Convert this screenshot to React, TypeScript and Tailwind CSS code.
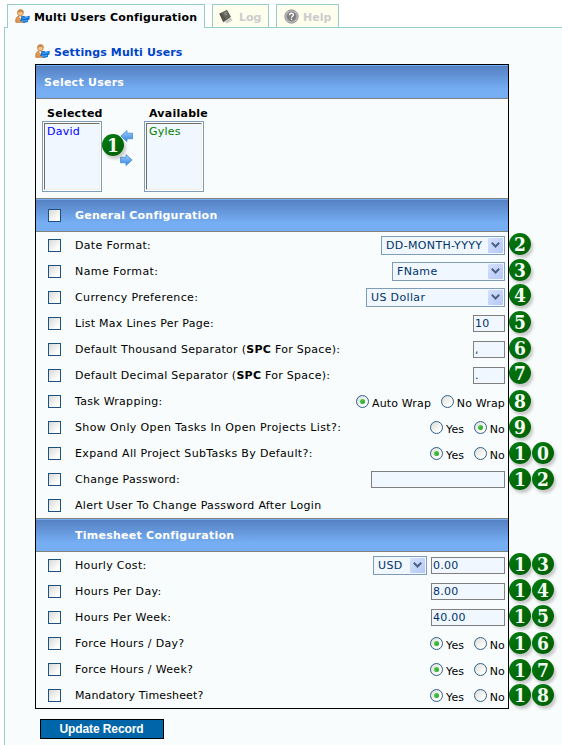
import type { ReactNode } from "react";

function UserIcon() {
  return (
    <svg width="15" height="15" viewBox="0 0 15 15" className="shrink-0">
      <path d="M.8 13.300C.4 9.500 1.500 7.600 4 7l3 .2c2 .8 3 3 3 6.100z" fill="#e09a55" stroke="#b5651d" strokeWidth=".7" />
      <path d="M4 7.300l1.300 2.500L7 7.300z" fill="#fff" />
      <circle cx="5.400" cy="4" r="2.900" fill="#f6c48c" stroke="#b5651d" strokeWidth=".6" />
      <path d="M2.400 4.200C2 1.500 3.800.2 5.500.3c2.300 0 3.600 1.500 3 3.800C7.500 2.800 4.500 2.300 2.400 4.200z" fill="#c98a48" />
      <path d="M6 7.600l3.200-.8 1 1 4.600-1-.4 3.700-1.500.8v1.800l-4.600.9-.8-1.600-2.800-.9 1.600-1.400z" fill="#0f6fd6" />
      <path d="M7 8.600l2 .8 4.500-1.400M7 11.600l2 .6 3-.8" stroke="#4fb4f5" strokeWidth="1" fill="none" />
    </svg>
  );
}

function BookIcon() {
  return (
    <svg width="14" height="15" viewBox="0 0 14 15" className="shrink-0">
      <path d="M5.500 11.500l5.500-3.500 2.500 3.500-6 3z" fill="#b9b9b4" />
      <path d="M6 12.500l5.500-2.800M7 13.500l6-2.500" stroke="#eee" strokeWidth=".6" />
      <path d="M.5 4.500L8 .8l4 7-6.200 4.500-1 1.200L3.500 12z" fill="#66665f" />
      <path d="M.7 4.700l4 7.500M1.500 4l5 7" stroke="#44443e" strokeWidth=".9" />
      <path d="M5 4.500l3-1.500M6 6l2-1" stroke="#a9a9a2" strokeWidth=".9" />
    </svg>
  );
}

function HelpIcon() {
  return (
    <svg width="15" height="15" viewBox="0 0 15 15" className="shrink-0">
      <circle cx="7.500" cy="7.500" r="6.700" fill="#c4c4c4" stroke="#8c8c8c" strokeWidth=".9" />
      <circle cx="7.500" cy="7.500" r="4.900" fill="#7d7d7d" stroke="#9c9c9c" strokeWidth=".8" />
      <path d="M5.500 6.200c.1-2.700 4.100-2.400 3.900-.2-.1 1.300-1.900 1.300-1.900 2.700" fill="none" stroke="#fff" strokeWidth="1.300" />
      <rect x="6.800" y="9.600" width="1.400" height="1.400" fill="#fff" />
    </svg>
  );
}

function MoveArrow({ left = false }: { left?: boolean }) {
  return (
    <svg width="13" height="12" viewBox="0 0 14 13" preserveAspectRatio="none" className={left ? "-scale-x-100" : ""}>
      <defs>
        <linearGradient id="arrowFill" x1="0" y1="0" x2="0" y2="1">
          <stop offset="0" stopColor="#a5d2fa" />
          <stop offset="1" stopColor="#2d83df" />
        </linearGradient>
      </defs>
      <path d="M.5 3.500h6v-3l6.500 6-6.500 6v-3h-6z" fill="url(#arrowFill)" stroke="#3f85d2" strokeWidth=".8" />
    </svg>
  );
}

function Badge({ n, className }: { n: string; className: string }) {
  return (
    <div className={`absolute z-10 flex gap-px ${className}`}>
      {n.split("").map((d, i) => (
        <span
          key={i}
          className="flex h-[22px] w-[22px] items-center justify-center rounded-full bg-linear-135 from-[#087f12] via-[#006b08] to-[#005c0a] font-['DejaVu_Serif_Condensed','DejaVu_Serif',serif] text-[19px] leading-[22px] font-bold tracking-normal font-stretch-condensed text-[#f4fbf0] shadow-[2px_3px_3px_rgba(90,80,80,0.3)]"
        >
          {d}
        </span>
      ))}
    </div>
  );
}

function Check() {
  return <span className="h-[13px] w-[13px] shrink-0 border border-[#1c5180] bg-linear-135 from-[#d9d9d4] to-white to-80%" />;
}

function Select({ value, className }: { value: string; className: string }) {
  return (
    <div className={`flex h-[19px] items-center border border-[#7f9db9] bg-[#f0f7ff] pl-1 text-[#003366] ${className}`}>
      <span className="grow pt-px tracking-[0.35px] whitespace-nowrap">{value}</span>
      <span className="mr-px flex h-[15px] w-[15px] shrink-0 items-center justify-center rounded-[1px] bg-linear-135 from-[#d5e0fd] to-[#b4c8f6]">
        <svg width="9" height="6" viewBox="0 0 9 6">
          <path d="M.8.8l3.700 3.700L8.200.8" fill="none" stroke="#4d6185" strokeWidth="2" />
        </svg>
      </span>
    </div>
  );
}

function Field({ value = "", className }: { value?: string; className: string }) {
  return (
    <div className={`flex h-[17px] items-center border border-[#7f7f7f] bg-[#f0f7ff] pt-px pl-px text-[#003366] ${className}`}>
      {value}
    </div>
  );
}

function Radio({ on = false }: { on?: boolean }) {
  return (
    <span className="flex h-[13px] w-[13px] shrink-0 items-center justify-center rounded-full border border-[#2f5f8f] bg-linear-135 from-[#dcdcd7] to-white to-80%">
      {on && <span className="h-[5px] w-[5px] rounded-full bg-linear-135 from-[#55d551] to-[#1ba01b]" />}
    </span>
  );
}

function Choice({ labels, picked, className }: { labels: [string, string]; picked: 0 | 1; className: string }) {
  return (
    <div className={`flex shrink-0 tracking-[0.15px] ${className}`}>
      {labels.map((label, i) => (
        <div key={label} className={`flex whitespace-nowrap ${i === 0 ? "grow" : ""}`}>
          <Radio on={picked === i} />
          <span className="ml-[3px] h-[13px] leading-[17px]">{label}</span>
        </div>
      ))}
    </div>
  );
}

type RowProps = { label: ReactNode; badge?: string; badgeTop?: string; tracking?: string; children?: ReactNode };

function Row({ label, badge, badgeTop = "top-px", tracking = "tracking-[0.32px]", children }: RowProps) {
  return (
    <div className="relative flex h-[26px] items-center pr-[3px] pl-3">
      <Check />
      <span className={`ml-3.5 grow pt-px whitespace-nowrap ${tracking}`}>{label}</span>
      {children}
      {badge && <Badge n={badge} className={`left-[473px] ${badgeTop}`} />}
    </div>
  );
}

function Header({ title, check = false }: { title: string; check?: boolean }) {
  return (
    <div className="flex h-[34px] items-center border-y border-[#808080] bg-linear-to-b from-[#547fc0] to-[#76aef4] to-75% pl-3 font-bold text-white shadow-[inset_0_1px_0_#76aef4]">
      {check ? <Check /> : <span className="w-[13px]" />}
      <span className="ml-3.5 pt-0.5 tracking-[0.25px]">{title}</span>
    </div>
  );
}

function UserList({ title, name, color }: { title: string; name: string; color: string }) {
  return (
    <div className="w-[60px]">
      <div className="ml-[5px] h-[15px] leading-[16px] font-bold whitespace-nowrap">{title}</div>
      <div className="h-[71px] border border-[#7f9db9] bg-white p-px">
        <div className={`h-full border border-t-[#716f64] border-r-[#f1efe2] border-b-[#f1efe2] border-l-[#716f64] bg-[#f0f7ff] pl-0.5 leading-[15px] ${color}`}>
          {name}
        </div>
      </div>
    </div>
  );
}

const yesNo: [string, string] = ["Yes", "No"];

export default function App() {
  return (
    <div className="h-[745px] w-[562px] overflow-hidden bg-white pt-1 pl-1 font-['DejaVu_Sans',Verdana,sans-serif] text-[11px] leading-[14px] tracking-[0.25px] text-black">
      <div className="flex h-[23px] gap-[7px] pl-[3px] font-bold tracking-normal text-[#cccccc]">
        <div className="relative z-10 flex h-6 w-[198px] items-center border border-b-0 border-[#99cccc] bg-[#f8fcfc] pb-px pl-[7px] text-black">
          <UserIcon />
          <span className="ml-1 pt-1 tracking-[0.16px] whitespace-nowrap">Multi Users Configuration</span>
        </div>
        <div className="flex w-[57px] items-center border border-b-0 border-[#99cccc] bg-[#ffffee] pl-[6px]">
          <BookIcon />
          <span className="ml-[6px] pt-[3px]">Log</span>
        </div>
        <div className="flex w-[63px] items-center border border-b-0 border-[#99cccc] bg-[#ffffee] pl-[7px]">
          <HelpIcon />
          <span className="ml-[4px] pt-[3px]">Help</span>
        </div>
      </div>

      <div className="h-[718px] border-t border-l border-[#99cccc] bg-[#f8fcfc] pl-[30px]">
        <div className="flex h-9 items-center pt-2.5 font-bold text-[#0044cc]">
          <UserIcon />
          <span className="ml-1 pt-[3px] tracking-[0.12px]">Settings Multi Users</span>
        </div>

        <div className="w-[474px] border border-black">
          <div className="flex h-[34px] items-center border-b border-[#808080] bg-linear-to-b from-[#547fc0] to-[#76aef4] to-75% pt-[3px] pl-2 font-bold text-white shadow-[inset_0_1px_0_#76aef4]">
            Select Users
          </div>
          <div className="relative flex h-[99px] pt-[7px] pl-1.5">
            <UserList title="Selected" name="David" color="text-[#0000ff]" />
            <div className="flex w-[42px] flex-col items-center gap-3 pt-[24px] pl-[7px]">
              <MoveArrow left />
              <MoveArrow />
            </div>
            <UserList title="Available" name="Gyles" color="text-[#008000]" />
            <Badge n="1" className="top-[35px] left-[66px]" />
          </div>

          <Header title="General Configuration" check />
          <Row label="Date Format:" badge="2">
            <Select value="DD-MONTH-YYYY" className="w-[124px]" />
          </Row>
          <Row label="Name Format:" badge="3" tracking="tracking-[0.42px]">
            <Select value="FName" className="w-[113px]" />
          </Row>
          <Row label="Currency Preference:" badge="4" badgeTop="top-0" tracking="tracking-[0.38px]">
            <Select value="US Dollar" className="w-[139px]" />
          </Row>
          <Row label="List Max Lines Per Page:" badge="5" tracking="tracking-[0.27px]">
            <Field value="10" className="w-8" />
          </Row>
          <Row label={<>Default Thousand Separator (<b>SPC</b> For Space):</>} badge="6" tracking="tracking-[0.29px]">
            <Field value="," className="w-8" />
          </Row>
          <Row label={<>Default Decimal Separator (<b>SPC</b> For Space):</>} badge="7" badgeTop="top-0" tracking="tracking-[0.27px]">
            <Field value="." className="w-8" />
          </Row>
          <Row label="Task Wrapping:" badge="8" badgeTop="top-0.5" tracking="tracking-[0.28px]">
            <Choice labels={["Auto Wrap", "No Wrap"]} picked={0} className="w-[149px]" />
          </Row>
          <Row label="Show Only Open Tasks In Open Projects List?:" badge="9" badgeTop="top-0.5" tracking="tracking-[0.37px]">
            <Choice labels={yesNo} picked={1} className="w-[75px]" />
          </Row>
          <Row label="Expand All Project SubTasks By Default?:" badge="10" badgeTop="top-0.5" tracking="tracking-[0.34px]">
            <Choice labels={yesNo} picked={0} className="w-[75px]" />
          </Row>
          <Row label="Change Password:" badge="12" badgeTop="top-0.5" tracking="tracking-[0.27px]">
            <Field className="w-[134px]" />
          </Row>
          <Row label="Alert User To Change Password After Login" />

          <Header title="Timesheet Configuration" />
          <Row label="Hourly Cost:" badge="13">
            <Select value="USD" className="mr-1 w-[54px]" />
            <Field value="0.00" className="mt-px w-[74px]" />
          </Row>
          <Row label="Hours Per Day:" badge="14" tracking="tracking-[0.38px]">
            <Field value="8.00" className="w-[74px]" />
          </Row>
          <Row label="Hours Per Week:" badge="15" tracking="tracking-[0.38px]">
            <Field value="40.00" className="w-[74px]" />
          </Row>
          <Row label="Force Hours / Day?" badge="16" badgeTop="top-0.5">
            <Choice labels={yesNo} picked={0} className="w-[75px]" />
          </Row>
          <Row label="Force Hours / Week?" badge="17" badgeTop="top-[3px]">
            <Choice labels={yesNo} picked={0} className="w-[75px]" />
          </Row>
          <Row label="Mandatory Timesheet?" badge="18" badgeTop="top-0.5" tracking="tracking-[0.13px]">
            <Choice labels={yesNo} picked={0} className="w-[75px]" />
          </Row>
        </div>

        <button className="mt-[10px] ml-[5px] flex h-5 w-[124px] items-center justify-center border border-black bg-[#0066aa] pr-px font-['Liberation_Sans',Arial,sans-serif] text-[12px] font-bold tracking-[-0.1px] text-white">
          Update Record
        </button>
      </div>
    </div>
  );
}
